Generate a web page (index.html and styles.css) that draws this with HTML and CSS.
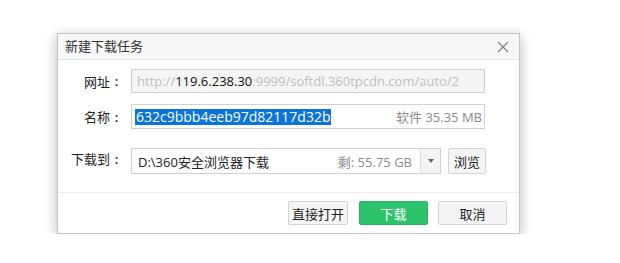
FILE: index.html
```html
<!DOCTYPE html>
<html>
<head>
<meta charset="utf-8">
<link rel="stylesheet" href="styles.css">
</head>
<body>
<div class="dialog">
  <div class="titlebar">
    <span class="title">新建下载任务</span>
    <svg class="close" width="12" height="12" viewBox="0 0 12 12"><path d="M1 1L11 11M11 1L1 11" stroke="#808080" stroke-width="1.2" fill="none"/></svg>
  </div>
  <div class="content">
    <div class="row row-url">
      <label class="label">网址<span class="colon">:</span></label>
      <div class="field field-url"><span class="dim">http://</span>119.6.238.30<span class="dim">:9999/softdl.360tpcdn.com/auto/2</span></div>
    </div>
    <div class="row row-name">
      <label class="label">名称<span class="colon">:</span></label>
      <div class="field field-name"><span class="sel">632c9bbb4eeb97d82117d32b</span><span class="info">软件 35.35 MB</span></div>
    </div>
    <div class="row row-dest">
      <label class="label label-dest">下载到<span class="colon">:</span></label>
      <div class="combo">
        <span class="path">D:\360安全浏览器下载</span>
        <span class="free">剩: 55.75 GB</span>
        <span class="arrow"><svg width="6" height="4" viewBox="0 0 6 4"><path d="M0 0H6L3 4Z" fill="#666"/></svg></span>
      </div>
      <button class="btn btn-browse">浏览</button>
    </div>
  </div>
  <div class="footer">
    <button class="btn btn-open">直接打开</button>
    <button class="btn btn-primary">下载</button>
    <button class="btn btn-cancel">取消</button>
  </div>
</div>
</body>
</html>
```
FILE: styles.css
```css
* { box-sizing: border-box; }
html, body { margin: 0; padding: 0; background: #fff; }
body {
  padding: 33px 0 0 57px;
  font-family: "Open Sans", "Noto Sans CJK SC", "Microsoft YaHei", sans-serif;
  font-size: 13px;
  color: #222;
}
.dialog {
  width: 463px;
  height: 201px;
  background: #fff;
  border: 1px solid #c4c4c4;
  box-shadow: 0 3px 12px rgba(0,0,0,0.28);
  display: flex;
  flex-direction: column;
}
.titlebar {
  height: 26px;
  background: #f7f7f7;
  border-bottom: 1px solid #e3e3e3;
  display: flex;
  align-items: center;
  justify-content: space-between;
  padding: 0 10px 0 7px;
}
.title { color: #333; font-size: 13px; line-height: 1; }
.close { display: block; }
.content {
  flex: 1;
  padding: 9px 0 0 0;
  border-bottom: 1px solid #ececec;
}
.row { display: flex; align-items: center; }
.label {
  width: 67px;
  display: flex;
  justify-content: flex-end;
  align-items: center;
  padding-right: 2px;
  margin-right: 6px;
  color: #222;
  flex: none;
}
.colon { width: 13px; text-align: center; font-weight: 600; }
.field {
  height: 24px;
  width: 354px;
  border: 1px solid #cfcfcf;
  display: flex;
  align-items: center;
  padding: 0 3px;
  white-space: nowrap;
  overflow: hidden;
}
.field-url { background: #f5f5f5; color: #111; padding-left: 5px; }
.dim { color: #bdbdbd; }
.row-name { margin-top: 11px; }
.field-name { height: 25px; justify-content: space-between; padding-right: 2px; }
.sel { background: #0a74d8; color: #fff; line-height: 16px; padding: 0 1px; font-size: 14px; }
.info { color: #8a8a8a; }
.row-dest { margin-top: 19px; align-items: flex-start; }
.label-dest { padding-top: 1px; }
.combo {
  width: 310px;
  height: 26px;
  border: 1px solid #cfcfcf;
  display: flex;
  align-items: center;
  padding-left: 6px;
}
.path { flex: 1; color: #222; }
.free { color: #8a8a8a; margin-right: 8px; }
.arrow {
  width: 20px;
  height: 100%;
  background: #f4f4f4;
  border-left: 1px solid #e0e0e0;
  display: flex;
  align-items: center;
  justify-content: center;
}
.btn {
  font-family: inherit;
  font-size: 13px;
  color: #222;
  background: #f5f5f5;
  border: 1px solid #d3d3d3;
  border-radius: 2px;
  padding: 0;
  height: 24px;
}
.btn-browse { width: 38px; height: 26px; margin-left: 7px; }
.footer {
  height: 40px;
  display: flex;
  justify-content: flex-end;
  align-items: flex-start;
  padding: 8px 12px 0 0;
}
.btn-open { width: 60px; }
.btn-primary { width: 69px; margin-left: 11px; background: #2dc36b; border-color: #27b561; color: #fff; }
.btn-cancel { width: 69px; margin-left: 10px; }
```
